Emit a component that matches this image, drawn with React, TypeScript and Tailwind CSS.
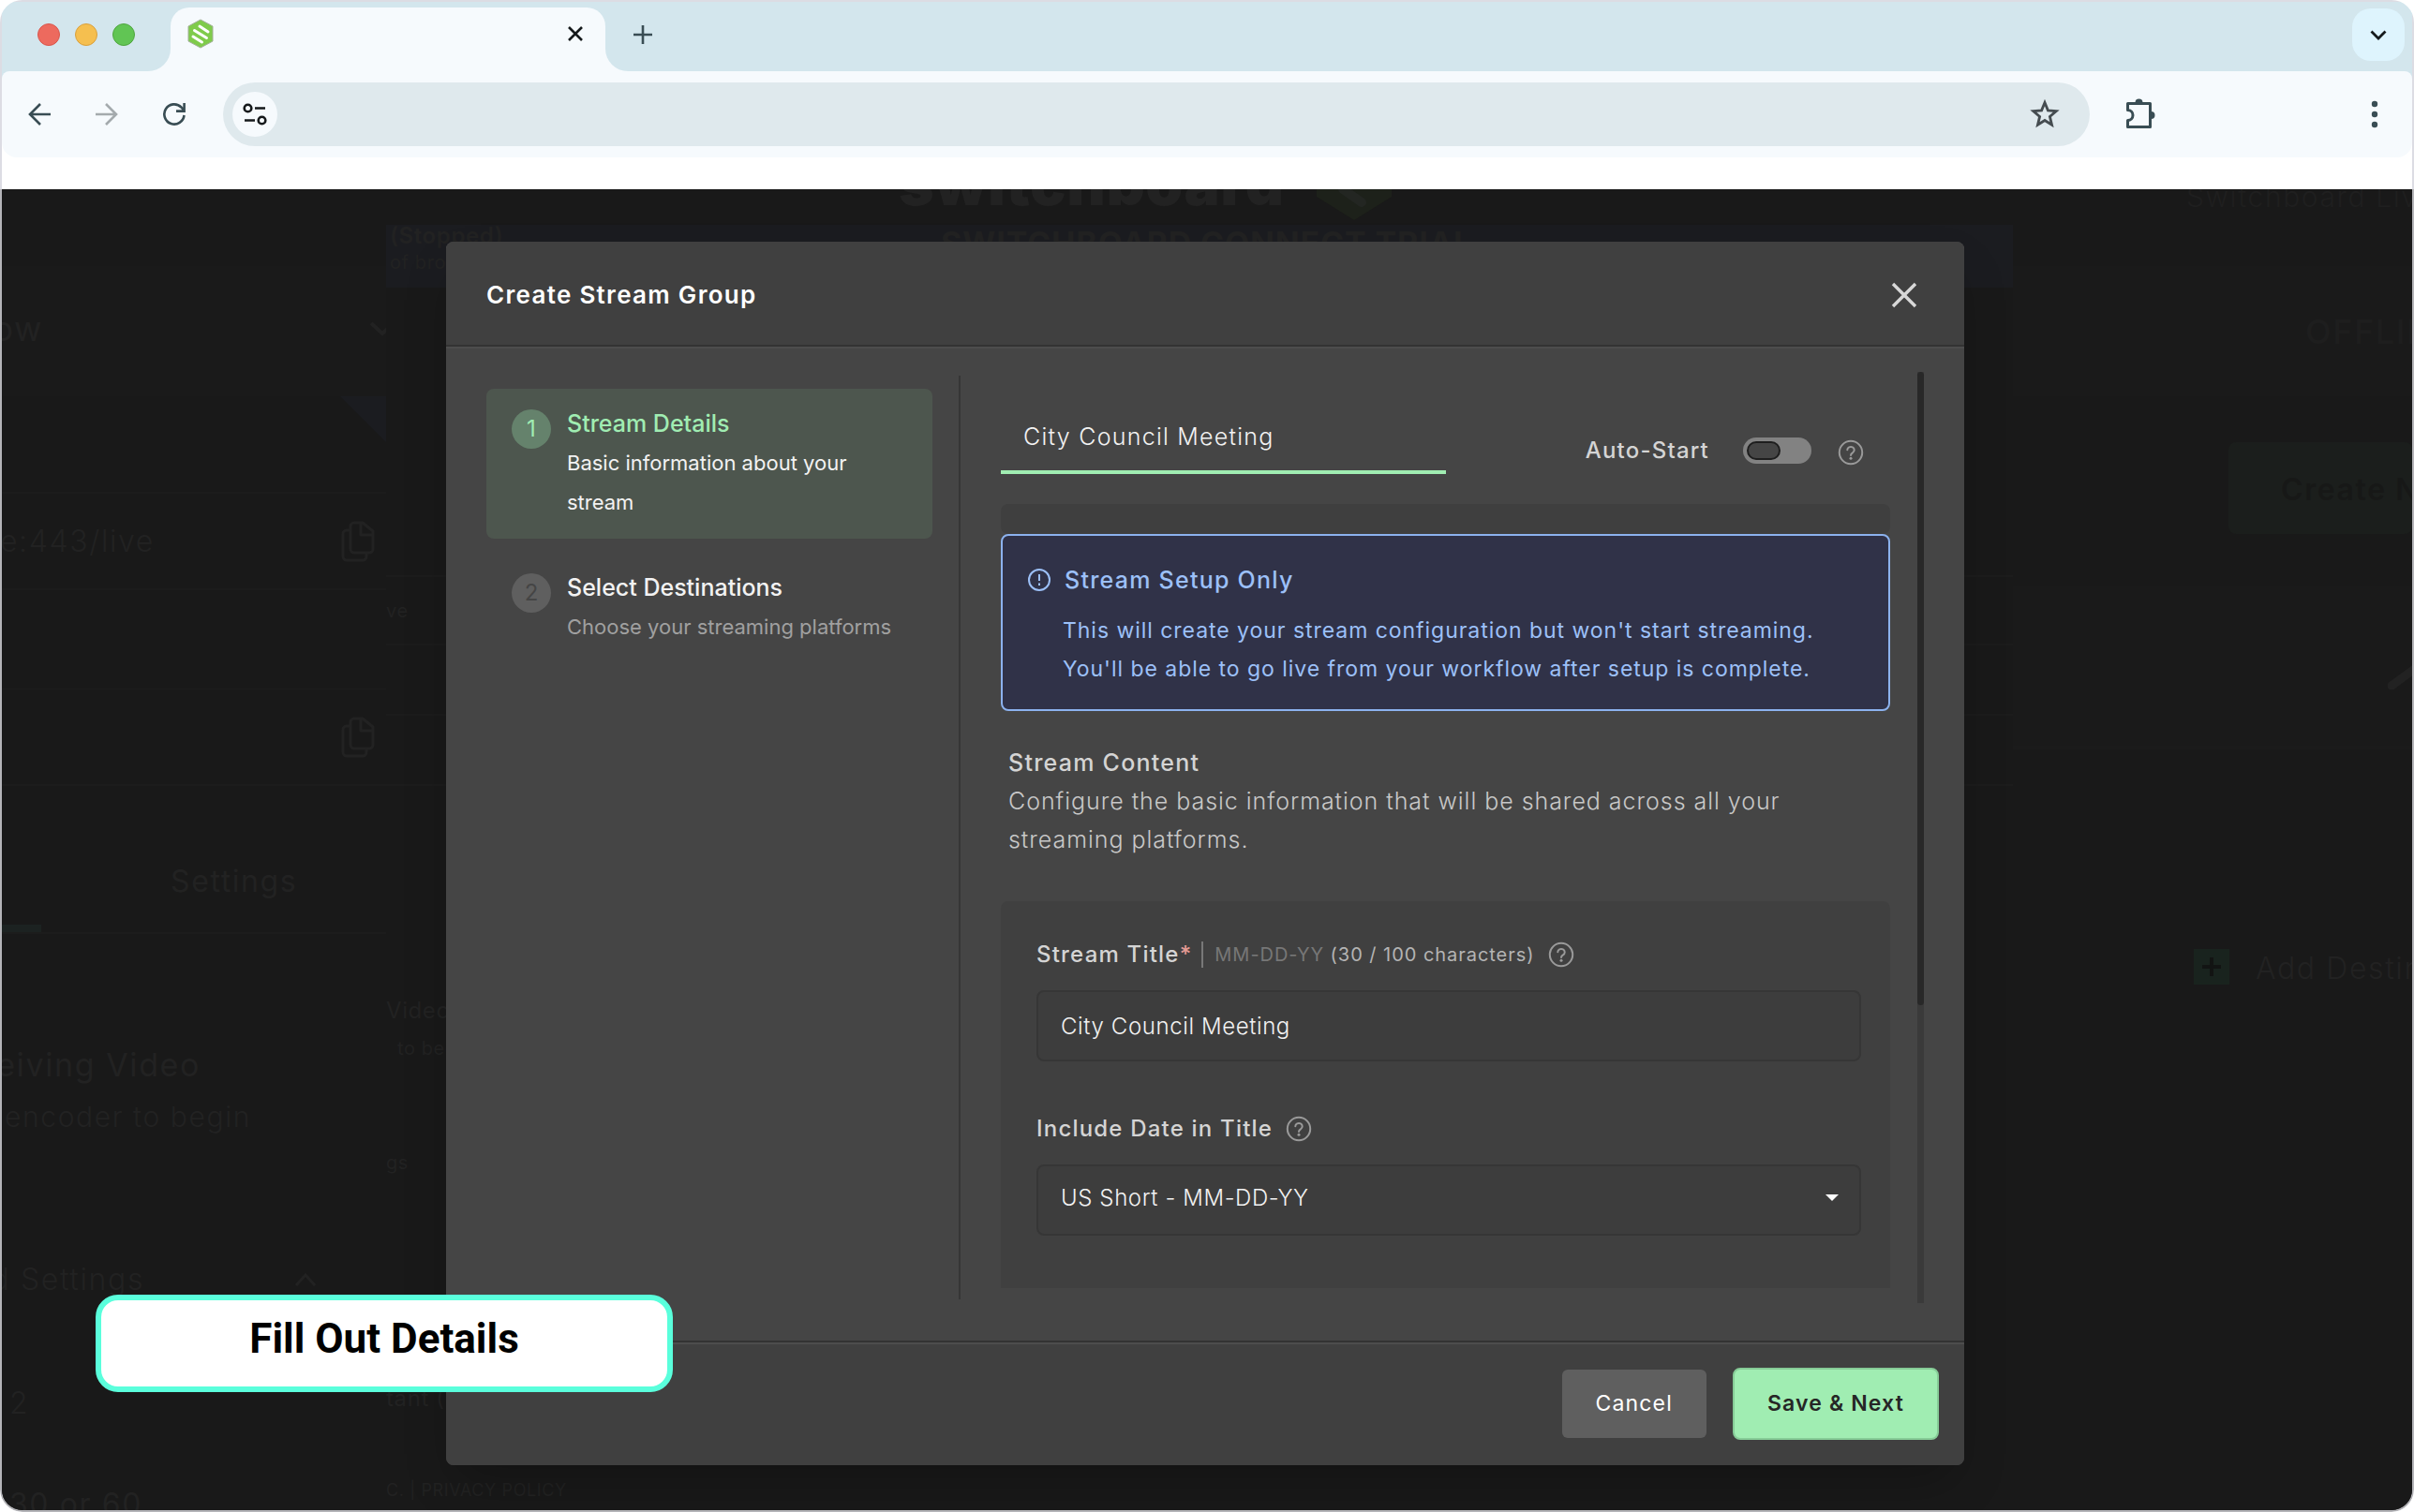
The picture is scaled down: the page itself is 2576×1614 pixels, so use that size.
import { useState } from 'react';
import type { ReactNode } from 'react';

function Logo({ className }: { className: string }) {
  return (
    <svg viewBox="0 0 28 32" className={className} aria-hidden="true">
      <path d="M14 1 27 8v16l-13 7L1 24V8z" fill="currentColor" stroke="#a3b09b" strokeWidth="1" strokeLinejoin="round" />
      <g stroke="#fff" strokeWidth="3" strokeLinecap="round" fill="none">
        <path d="m13 8 9 6" />
        <path d="m7.500 12.500 13 8" />
        <path d="m6 19 9.500 6" />
      </g>
    </svg>
  );
}

function HelpIcon() {
  return (
    <svg viewBox="0 0 28 28" className="size-7 shrink-0 text-[#9a9a9a]" fill="none" stroke="currentColor" aria-hidden="true">
      <circle cx="14" cy="14" r="12.200" strokeWidth="2" />
      <path d="M10.300 11.300a3.700 3.400 0 1 1 5.600 3c-1.300.8-1.900 1.300-1.900 2.700" strokeWidth="2" strokeLinecap="round" />
      <circle cx="14" cy="20.300" r="1.500" fill="currentColor" stroke="none" />
    </svg>
  );
}

function CopyIcon() {
  return (
    <svg viewBox="0 0 36 44" className="h-11 w-9 shrink-0" fill="none" stroke="currentColor" strokeWidth="3" strokeLinejoin="round" aria-hidden="true">
      <path d="M14 2h9l11 9v19a4 4 0 0 1-4 4H14a4 4 0 0 1-4-4V6a4 4 0 0 1 4-4z" />
      <path d="M21 3v12h12M9 10H6a4 4 0 0 0-4 4v24a4 4 0 0 0 4 4h17a4 4 0 0 0 4-4v-3" />
    </svg>
  );
}

function BrowserBar() {
  return (
    <header className="border-x-2 border-t-2 border-[#dcdce3] bg-white">
      <div className="flex h-[74px] bg-[#f6fafd]">
        <div className="flex w-[180px] shrink-0 items-center gap-4 rounded-br-3xl bg-[#d3e6ed] pb-1 pl-[38px]">
          <span className="size-6 rounded-full border border-[#d9564c] bg-[#ed6a5e]" />
          <span className="size-6 rounded-full border border-[#d9a03c] bg-[#f5bf4f]" />
          <span className="size-6 rounded-full border border-[#4fa53f] bg-[#61c554]" />
        </div>
        <div className="w-[464px] shrink-0 bg-[#d3e6ed] pt-1.5">
          <div className="flex h-full items-center justify-between rounded-t-[20px] bg-[#f6fafd] pr-6 pb-3 pl-[18px]">
            <Logo className="h-8 w-7 text-[#7fcb4b]" />
            <button type="button" aria-label="Close tab">
              <svg viewBox="0 0 16 16" className="size-4" stroke="#15191b" strokeWidth="2.600" aria-hidden="true">
                <path d="M1 1l14 14M15 1 1 15" />
              </svg>
            </button>
          </div>
        </div>
        <div className="flex flex-1 items-center justify-between rounded-bl-3xl bg-[#d3e6ed] pr-2 pb-1 pl-[30px]">
          <button type="button" aria-label="New tab">
            <svg viewBox="0 0 20 20" className="size-5" stroke="#394d54" strokeWidth="2.600" aria-hidden="true">
              <path d="M10 0v20M0 10h20" />
            </svg>
          </button>
          <button type="button" aria-label="Search tabs" className="grid size-14 place-items-center rounded-[20px] bg-[#def4fd]">
            <svg viewBox="0 0 18 11" className="h-[11px] w-[18px]" fill="none" stroke="#15191b" strokeWidth="2.800" aria-hidden="true">
              <path d="m1.500 1.500 7.500 7.500 7.500-7.500" />
            </svg>
          </button>
        </div>
      </div>
      <div className="bg-linear-to-b from-[#d3e6ed] from-50% to-white to-50%">
        <div className="flex h-[92px] items-center rounded-t-lg rounded-b-2xl bg-[#f6fafd] pr-[36px] pl-7 text-[#394d54]">
          <div className="flex items-center gap-12 pr-10">
            <button type="button" aria-label="Back">
              <svg viewBox="0 0 24 24" className="size-6" fill="none" stroke="currentColor" strokeWidth="2.600" aria-hidden="true">
                <path d="M24 12H2M13 1 2 12l11 11" />
              </svg>
            </button>
            <button type="button" aria-label="Forward" className="text-[#a4aaad]">
              <svg viewBox="0 0 24 24" className="size-6" fill="none" stroke="currentColor" strokeWidth="2.600" aria-hidden="true">
                <path d="M0 12h22M11 1l11 11-11 11" />
              </svg>
            </button>
            <button type="button" aria-label="Reload">
              <svg viewBox="0 0 24 24" className="size-6" fill="none" stroke="currentColor" strokeWidth="2.600" aria-hidden="true">
                <path d="M22.500 13a10.600 10.600 0 1 1-3-8.500L22 7.500M22.600 0v8.600H14" />
              </svg>
            </button>
          </div>
          <div className="flex h-[68px] flex-1 items-center justify-between rounded-full bg-[#dfe9ed] pr-8 pl-2.5">
            <button type="button" aria-label="Site settings" className="grid size-12 place-items-center rounded-full bg-[#f6fafd]">
              <svg viewBox="0 0 26 24" className="h-6 w-[26px]" fill="none" stroke="#15191b" strokeWidth="2.600" aria-hidden="true">
                <circle cx="5.500" cy="5.500" r="3.800" />
                <path d="M13 5.500h11M2 18.500h11" />
                <circle cx="20.500" cy="18.500" r="3.800" />
              </svg>
            </button>
            <button type="button" aria-label="Bookmark">
              <svg viewBox="0 1 32 32" className="size-8" fill="none" stroke="#454c50" strokeWidth="2.800" aria-hidden="true">
                <path d="m16 4.500 3.400 8.400 8.800.7-6.800 5.800 2.100 8.900-7.500-4.800-7.500 4.800 2.100-8.900-6.800-5.800 8.800-.7z" />
              </svg>
            </button>
          </div>
          <button type="button" aria-label="Extensions" className="ml-9">
            <svg viewBox="0 1 34 34" className="size-[34px]" fill="none" stroke="currentColor" strokeWidth="3" strokeLinejoin="round" aria-hidden="true">
              <path d="M4.500 6.500h24v25h-24v-7a5.500 5.500 0 0 0 0-11z" />
              <path d="M12.500 5.500a4 4 0 0 1 8 0zM29.500 15a4 4 0 0 1 0 8z" fill="currentColor" stroke="none" />
            </svg>
          </button>
          <button type="button" aria-label="Menu" className="ml-[230px]">
            <svg viewBox="0 0 8 30" className="h-[30px] w-2" fill="currentColor" aria-hidden="true">
              <circle cx="4" cy="4" r="3.200" />
              <circle cx="4" cy="15" r="3.200" />
              <circle cx="4" cy="26" r="3.200" />
            </svg>
          </button>
        </div>
      </div>
      <div className="h-[34px]" />
    </header>
  );
}

// The workflow page, dimmed behind the dialog
function Backdrop() {
  return (
    <div className="col-start-1 row-start-1 flex h-0 min-h-full min-w-0 overflow-hidden bg-[#191919] whitespace-nowrap text-[#222222]" aria-hidden="true">
      <div className="flex w-[410px] shrink-0 flex-col overflow-hidden text-[32px] leading-10 font-light tracking-wider *:shrink-0">
        <div className="mt-[82px] flex h-[139px] items-center bg-[#1a1a1a] pb-1.5">
          <span className="flex w-11 justify-end text-4xl font-normal">Workflow</span>
          <svg viewBox="0 0 28 16" className="-mr-2.5 ml-auto h-4 w-7" fill="none" stroke="currentColor" strokeWidth="4">
            <path d="m2 2 12 11L26 2" />
          </svg>
        </div>
        <div className="flex h-[104px] justify-end border-b-2 border-[#1c1c1c]">
          <svg viewBox="0 0 49 49" className="size-[49px]">
            <path d="M0 0h49v49z" fill="#1b1c20" />
          </svg>
        </div>
        <div className="flex h-[103px] items-center justify-between border-b-2 border-[#1c1c1c] pr-3">
          <span className="flex w-[163px] justify-end">.live:443/live</span>
          <CopyIcon />
        </div>
        <div className="h-[106px] border-b border-[#1c1c1c]" />
        <div className="flex h-[103px] items-center justify-end border-b-2 border-[#1c1c1c] pr-3">
          <CopyIcon />
        </div>
        <div className="mt-12 flex h-[110px] border-b-2 border-[#1c1c1c]">
          <span className="w-[42px] border-b-8 border-[#1c2221]" />
          <span className="flex-1 pt-[34px] pl-[138px] font-normal">Settings</span>
        </div>
        <div className="mt-[120px] flex w-[212px] justify-end text-[34px] font-normal">Not Receiving Video</div>
        <div className="mt-[15px] flex w-[266px] justify-end text-3xl leading-10">Start your encoder to begin</div>
        <div className="mt-[134px] flex items-center">
          <span className="flex w-[152px] justify-end">Advanced Settings</span>
          <svg viewBox="0 0 24 14" className="ml-40 h-3.5 w-6" fill="none" stroke="currentColor" strokeWidth="3">
            <path d="M2 13 12 2l10 11" />
          </svg>
        </div>
        <div className="mt-[92px] pl-2">2</div>
        <div className="mt-[68px] pl-2 font-normal">30 or 60</div>
      </div>

      <div className="flex min-w-0 flex-1 flex-col overflow-hidden text-2xl leading-8 tracking-wide *:shrink-0">
        <div className="flex h-[38px] items-start gap-8 overflow-hidden pl-[547px]">
          <span className="-mt-2 text-[64px] leading-[4px] font-black">switchboard</span>
          <svg viewBox="0 0 84 36" className="h-9 w-[84px] shrink-0">
            <path d="M2 0h80v8L42 33 2 8z" fill="#1d211a" />
            <path d="m30 0 20 14" stroke="#232622" strokeWidth="10" strokeLinecap="round" />
          </svg>
        </div>
        <div className="flex h-[67px] overflow-hidden bg-[#1b1c20]">
          <div className="w-[592px] shrink-0 pl-1">
            <p className="leading-6 font-semibold">(Stopped)</p>
            <p className="text-xl leading-8">of broadcast</p>
          </div>
          <p className="text-[34px] leading-10 font-bold tracking-wide">SWITCHBOARD CONNECT TRIAL</p>
        </div>
        <div className="mt-[307px] flex h-[75px] items-center border-y-2 border-[#1c1c1c]">
          <span className="text-xl">ve</span>
        </div>
        <div className="h-[75px] border-b-2 border-[#1c1c1c]" />
        <div className="h-[75px] border-b-2 border-[#1c1c1c]" />
        <p className="mt-[224px]">Video</p>
        <p className="mt-2 pl-3 text-xl leading-8">to begin</p>
        <p className="mt-[90px] text-xl leading-8">gs</p>
        <p className="mt-[220px]">tant (Optional)</p>
        <p className="mt-[66px] text-lg leading-8">C. | PRIVACY POLICY</p>
      </div>

      <div className="w-[426px] shrink-0 overflow-hidden text-[32px] leading-10 font-light tracking-wider">
        <p className="h-[82px] pl-[185px] text-3xl leading-4 text-[#1f1f1f]">Switchboard Live</p>
        <div className="flex h-[139px] items-center bg-[#1a1a1a] pl-[312px] text-4xl font-medium text-[#1e1e1e]">OFFLINE</div>
        <div className="mt-[49px] ml-[230px] flex h-[98px] items-center rounded-lg bg-[#1b1e1c] pt-1 pl-14 font-semibold text-[#171817]">Create New</div>
        <div className="mt-14 flex h-[174px] items-start border-b-4 border-[#1b1b1b] bg-[#1a1a1a] pt-20 pl-[400px]">
          <svg viewBox="0 0 60 30" className="h-[30px] w-[60px] shrink-0">
            <path d="M4 26 34 4" stroke="#222222" strokeWidth="9" strokeLinecap="round" />
          </svg>
        </div>
        <div className="mt-[210px] flex items-center gap-7 pl-[193px]">
          <span className="grid size-[38px] shrink-0 place-items-center bg-[#19231e]">
            <svg viewBox="0 0 20 20" className="size-5" stroke="#121413" strokeWidth="4">
              <path d="M10 0v20M0 10h20" />
            </svg>
          </span>
          <span className="pt-1">Add Destination</span>
        </div>
      </div>
    </div>
  );
}

function Step({ number, title, text, active }: { number: number; title: string; text: string; active?: boolean }) {
  return (
    <li className={`flex items-start gap-[17px] rounded-lg px-[27px] pt-4 pb-[18px] ${active ? 'bg-[#4d564e]' : ''}`}>
      <span className={`mt-1.5 grid size-[42px] shrink-0 place-items-center rounded-full text-2xl ${active ? 'bg-[#65826c] text-[#a0edb2]' : 'bg-[#5f5f5f] text-[#454545]'}`}>
        {number}
      </span>
      <div>
        <h3 className={`text-[25px] leading-[42px] font-medium ${active ? 'text-[#a0edb2]' : 'text-[#f2f2f2]'}`}>{title}</h3>
        <p className={`text-[22px] leading-[42px] ${active ? 'text-[#f2f2f2]' : 'text-[#a0a0a0]'}`}>{text}</p>
      </div>
    </li>
  );
}

function FieldLabel({ htmlFor, children }: { htmlFor: string; children: ReactNode }) {
  return (
    <label htmlFor={htmlFor} className="text-2xl leading-8 font-medium tracking-wider text-[#d4d4d4]">
      {children}
    </label>
  );
}

function StreamGroupDialog() {
  const [name, setName] = useState('City Council Meeting');
  const [title, setTitle] = useState('City Council Meeting');
  const [autoStart, setAutoStart] = useState(false);

  return (
    <div role="dialog" aria-labelledby="dialog-title" className="flex w-full max-w-[1620px] flex-col overflow-hidden rounded-lg bg-[#454545] shadow-2xl">
      <div className="flex h-28 items-center justify-between border-b-2 border-[#333333] bg-[#404040] pt-1 pr-[50px] pl-[43px] shadow-[0_2px_0_#4d4d4d]">
        <h2 id="dialog-title" className="text-[26px] leading-8 font-semibold tracking-wider text-white">Create Stream Group</h2>
        <button type="button" aria-label="Close">
          <svg viewBox="0 0 28 28" className="size-7" stroke="#d8d8d8" strokeWidth="3.400" aria-hidden="true">
            <path d="m2 2 24 24M26 2 2 26" />
          </svg>
        </button>
      </div>

      <div className="flex pt-[27px] pb-10">
        <div className="mt-1 mb-1 w-[549px] shrink-0 border-r-2 border-[#363636] pt-3.5 pr-7 pl-[43px]">
          <ol className="flex flex-col gap-[15px]">
            <Step number={1} title="Stream Details" text="Basic information about your stream" active />
            <Step number={2} title="Select Destinations" text="Choose your streaming platforms" />
          </ol>
        </div>

        <div className="min-w-0 flex-1 pr-[29px] pb-4 pl-[43px] tracking-[0.06em]">
          <div className="flex items-start justify-between pt-9">
            <input
              aria-label="Stream group name"
              value={name}
              onChange={(e) => setName(e.target.value)}
              className="h-[73px] w-[475px] border-b-4 border-[#a0edb2] px-6 pb-1 text-[25px] font-light tracking-wider text-[#f2f2f2] outline-none"
            />
            <div className="flex items-center pt-8 pr-7">
              <FieldLabel htmlFor="auto-start">Auto-Start</FieldLabel>
              <input
                id="auto-start"
                type="checkbox"
                role="switch"
                checked={autoStart}
                onChange={(e) => setAutoStart(e.target.checked)}
                className="ml-9 flex h-7 w-[73px] appearance-none items-center rounded-full bg-[#828282] px-1 before:h-5 before:w-9 before:rounded-full before:border-2 before:border-[#1e1e1e] before:bg-[#454545] checked:justify-end"
              />
              <span className="pt-1 pl-7">
                <HelpIcon />
              </span>
            </div>
          </div>

          <div className="mt-8 h-8 rounded-lg bg-[#3f3f3f]" />

          <section className="rounded-lg border-2 border-[#8cb2ee] bg-[#303248] px-[27px] pt-[31px] pb-[22px] text-[#9cc0f8]">
            <div className="flex items-center gap-[15px]">
              <svg viewBox="0 0 24 24" className="size-6" fill="none" stroke="currentColor" strokeWidth="2" aria-hidden="true">
                <circle cx="12" cy="12" r="11" />
                <path d="M12 6v7M12 15.500V18" />
              </svg>
              <h3 className="text-[25px] leading-8 font-medium tracking-wider">Stream Setup Only</h3>
            </div>
            <p className="mt-[18px] pl-[37px] text-[23px] leading-[41px]">
              This will create your stream configuration but won't start streaming.
              <br />
              You'll be able to go live from your workflow after setup is complete.
            </p>
          </section>

          <section className="mt-[35px] px-2">
            <h3 className="text-[25px] leading-[41px] font-medium tracking-wider text-[#d4d4d4]">Stream Content</h3>
            <p className="text-[25px] leading-[41px] font-light text-[#c8c8c8]">
              Configure the basic information that will be shared across all your streaming platforms.
            </p>
          </section>

          <section className="mt-[45px] rounded-t-lg bg-[#404040] pt-[41px] pr-[31px] pb-14 pl-[38px]">
            <div className="flex items-center">
              <FieldLabel htmlFor="stream-title">
                Stream Title<span className="text-[#e59a94]">*</span>
              </FieldLabel>
              <span className="ml-2.5 h-7 w-0.5 bg-[#787878]" />
              <span className="ml-3 text-xl text-[#777777]">
                MM-DD-YY <span className="text-[#b4b4b4]">(30 / 100 characters)</span>
              </span>
              <span className="ml-3.5">
                <HelpIcon />
              </span>
            </div>
            <input
              id="stream-title"
              value={title}
              onChange={(e) => setTitle(e.target.value)}
              className="mt-[22px] h-[76px] w-full rounded-lg border-2 border-[#363636] bg-[#3d3d3d] px-6 text-2xl font-light tracking-wide text-[#f2f2f2] outline-none"
            />

            <div className="mt-14 flex items-center gap-3.5">
              <FieldLabel htmlFor="date-format">Include Date in Title</FieldLabel>
              <HelpIcon />
            </div>
            <div className="relative mt-[22px]">
              <select
                id="date-format"
                className="h-[76px] w-full appearance-none rounded-lg border-2 border-[#363636] bg-[#3d3d3d] px-6 pb-1 text-2xl font-light tracking-wide text-[#f2f2f2] outline-none"
              >
                <option>US Short - MM-DD-YY</option>
              </select>
              <svg viewBox="0 0 14 7" className="pointer-events-none absolute top-8 right-6 h-[7px] w-3.5" fill="#ffffff" aria-hidden="true">
                <path d="M0 0h14L7 7z" />
              </svg>
            </div>
          </section>
        </div>

        <div className="mr-[43px] w-[7px] shrink-0 bg-[#3a3a3a]">
          <div className="h-[68%] rounded-sm bg-[#282828]" />
        </div>
      </div>

      <div className="flex h-[133px] items-center justify-end gap-7 border-t-2 border-[#333333] bg-[#404040] pr-[27px] shadow-[inset_0_2px_0_#4d4d4d]">
        <button type="button" className="h-[73px] rounded-md bg-[#5f5f5f] px-9 text-[23px] tracking-wider text-white">Cancel</button>
        <button type="button" className="h-[77px] rounded-lg border-2 border-[#86cc97] bg-[#a0edb2] px-[35px] text-[23px] font-semibold tracking-wider text-[#262626]">
          Save &amp; Next
        </button>
      </div>
    </div>
  );
}

export default function App() {
  return (
    <main className="min-h-screen bg-white font-['Inter',sans-serif]">
      <div className="relative flex min-h-screen flex-col overflow-hidden rounded-3xl">
        <BrowserBar />
        <div className="grid flex-1 grid-cols-1 grid-rows-1 overflow-hidden rounded-b-3xl border-x-2 border-b-2 border-[#b4b4b8] bg-[#191919]">
          <Backdrop />
          <div className="col-start-1 row-start-1 flex items-start justify-center pt-14 pr-1 pb-10">
            <StreamGroupDialog />
          </div>
        </div>
        <div className="absolute bottom-32 left-[102px] flex h-[104px] w-[616px] items-center justify-center rounded-3xl border-6 border-[#5affdc] bg-white pb-2.5 font-['Roboto',sans-serif] text-[44px] font-bold text-black">
          Fill Out Details
        </div>
      </div>
    </main>
  );
}
